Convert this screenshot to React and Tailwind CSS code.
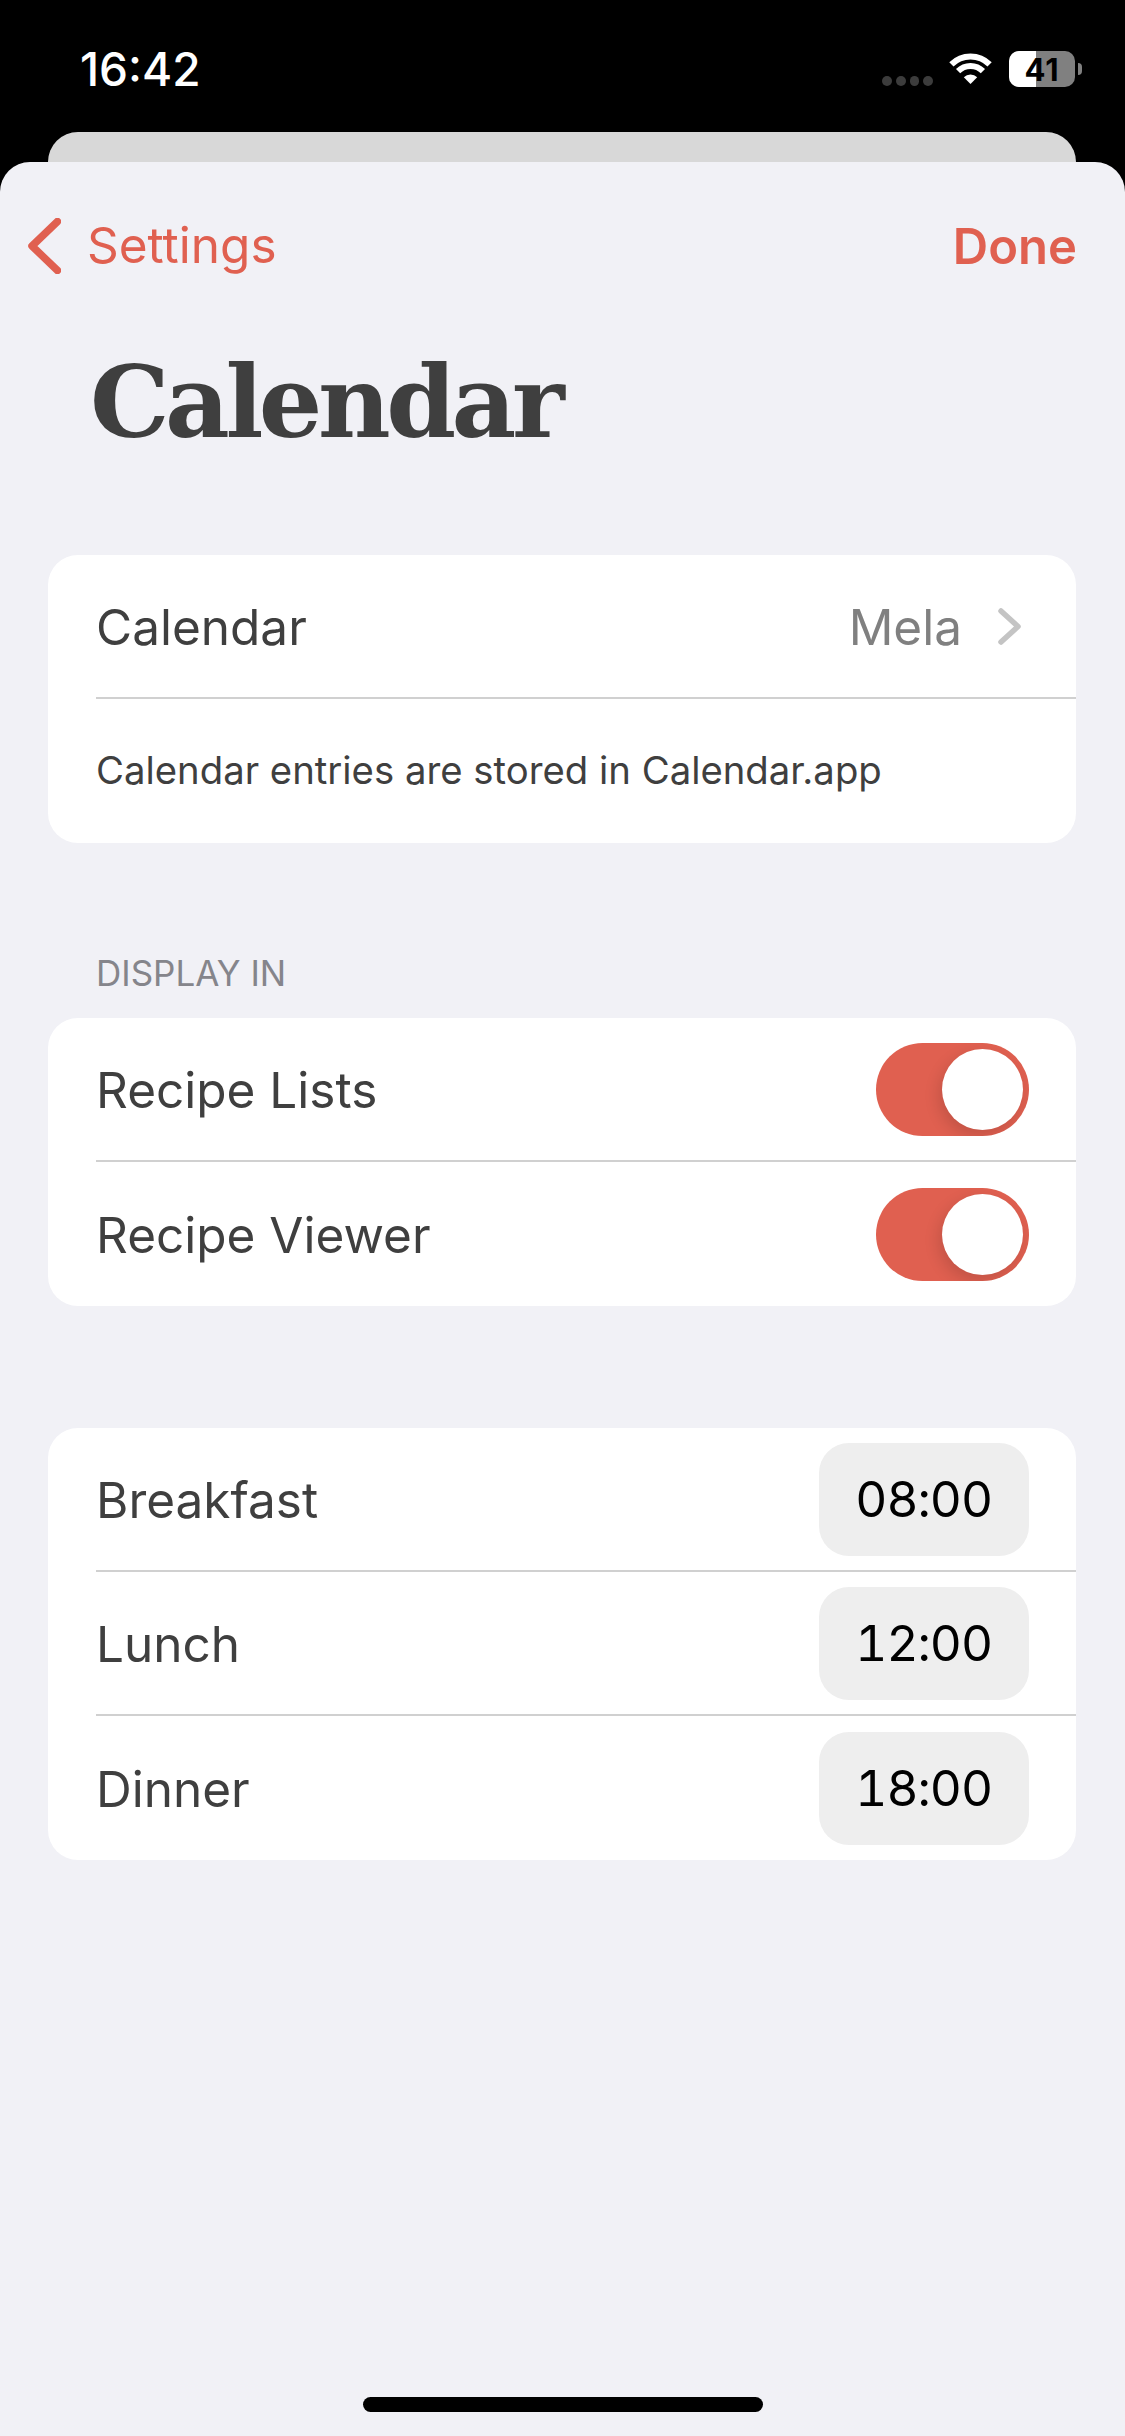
import React from 'react';

const SANS = { fontFamily: 'Inter, "Noto Sans", sans-serif' };

function Wifi() {
  return (
    <svg width="45" height="33" viewBox="0 0 45 33" fill="none" className="block">
      <path d="M3.4 13.4A27 27 0 0 1 41.6 13.4" stroke="#fff" strokeWidth="6" />
      <path d="M10.1 20.1A17.5 17.5 0 0 1 34.9 20.1" stroke="#fff" strokeWidth="6" />
      <path d="M22.5 33L15.8 26.3A9.5 9.5 0 0 1 29.2 26.3Z" fill="#fff" />
    </svg>
  );
}

function Battery() {
  return (
    <div className="flex items-center">
      <div className="relative w-[66px] h-[36px] rounded-[10px] overflow-hidden bg-[#808080] flex items-center justify-center">
        <div className="absolute left-0 top-0 bottom-0 w-[27px] bg-white" />
        <span className="relative text-[31px] font-bold text-black leading-none tracking-[1px]">41</span>
      </div>
      <div className="ml-[3px] w-[4px] h-[12px] rounded-r-full bg-[#808080]" />
    </div>
  );
}

function StatusBar() {
  return (
    <div className="h-[132px] flex justify-between pl-[80px] pr-[43px] pt-[51px] text-white">
      <span className="text-[46px] font-medium leading-[36px]">16:42</span>
      <div className="flex items-start">
        <div className="flex gap-[4px] mt-[25px] mr-[15px]">
          <div className="w-[9.75px] h-[9.75px] rounded-full bg-[#3c3c3c]" />
          <div className="w-[9.75px] h-[9.75px] rounded-full bg-[#3c3c3c]" />
          <div className="w-[9.75px] h-[9.75px] rounded-full bg-[#3c3c3c]" />
          <div className="w-[9.75px] h-[9.75px] rounded-full bg-[#3c3c3c]" />
        </div>
        <Wifi />
        <div className="ml-[16px]">
          <Battery />
        </div>
      </div>
    </div>
  );
}

function Toggle() {
  return (
    <div className="w-[153px] h-[93px] rounded-full bg-[#e06050] overflow-hidden flex items-center justify-end pr-[6px]">
      <div className="w-[81px] h-[81px] rounded-full bg-white shadow-[-3px_6px_16px_rgba(0,0,0,0.14)]" />
    </div>
  );
}

function TimePill({ time }) {
  return (
    <div className="w-[210px] h-[113px] rounded-[30px] bg-[#eeeeee] flex items-center justify-end pr-[37px] text-[49.5px] text-black tabular-nums tracking-[-1px]">
      {time}
    </div>
  );
}

function Row({ label, children, last }) {
  return (
    <div className="pl-[48px]">
      <div className={`h-[144px] flex items-center justify-between pr-[47px] ${last ? '' : 'border-b-2 border-[#d0d0d0]'}`}>
        <span className="text-[49.5px] font-[440] text-[#3f3f3f] pt-[2px]">{label}</span>
        {children}
      </div>
    </div>
  );
}

export default function App() {
  return (
    <div className="w-[1125px] h-[2436px] bg-black flex flex-col overflow-hidden" style={SANS}>
      <StatusBar />
      <div className="ml-[48px] mr-[49px] h-[30px] bg-[#d8d8d8] rounded-t-[30px]" />

      <div className="flex-1 bg-[#f1f1f6] rounded-t-[30px] flex flex-col">
        {/* Nav */}
        <div className="mt-[56px] h-[56px] flex items-center justify-between pl-[28px] pr-[48px] text-[#e06050]">
          <div className="flex items-center gap-[26px]">
            <svg width="33" height="56" viewBox="0 0 33 56" fill="none" className="block">
              <path d="M29.5 3.5L4 28L29.5 52.5" stroke="#e06050" strokeWidth="7.5" strokeLinecap="round" strokeLinejoin="round" />
            </svg>
            <span className="text-[49.5px] font-[430] leading-none">Settings</span>
          </div>
          <span className="text-[49px] font-semibold leading-none">Done</span>
        </div>

        {/* Title */}
        <h1
          className="ml-[90px] mt-[68px] text-[100px] leading-[120px] font-bold text-[#3f3f3f] tracking-[-4.5px]"
          style={{ fontFamily: '"DejaVu Serif", serif' }}
        >
          Calendar
        </h1>

        <div className="mt-[93px] ml-[48px] mr-[49px] bg-white rounded-[30px]">
          <Row label="Calendar">
            <div className="flex items-center">
              <span className="text-[49.5px] font-[440] text-[#808080] pt-[2px]">Mela</span>
              <svg width="23" height="37" viewBox="0 0 23 37" fill="none" className="block ml-[36px] mr-[8px]">
                <path d="M3 3L20 18.5L3 34" stroke="#c4c4c4" strokeWidth="5.5" strokeLinecap="round" strokeLinejoin="round" />
              </svg>
            </div>
          </Row>
          <div className="h-[144px] flex items-center pl-[48px] text-[38.3px] text-[#3f3f3f]">
            Calendar entries are stored in Calendar.app
          </div>
        </div>

        <div className="mt-[109px] ml-[96px] h-[42px] flex items-center text-[35px] text-[#85858b]">DISPLAY IN</div>

        <div className="mt-[24px] ml-[48px] mr-[49px] bg-white rounded-[30px]">
          <Row label="Recipe Lists"><Toggle /></Row>
          <Row label="Recipe Viewer" last><Toggle /></Row>
        </div>

        <div className="mt-[122px] ml-[48px] mr-[49px] bg-white rounded-[30px]">
          <Row label="Breakfast"><TimePill time="08:00" /></Row>
          <Row label="Lunch"><TimePill time="12:00" /></Row>
          <Row label="Dinner" last><TimePill time="18:00" /></Row>
        </div>

        <div className="mt-auto mb-[24px] mx-auto w-[400px] h-[15px] rounded-full bg-black" />
      </div>
    </div>
  );
}
